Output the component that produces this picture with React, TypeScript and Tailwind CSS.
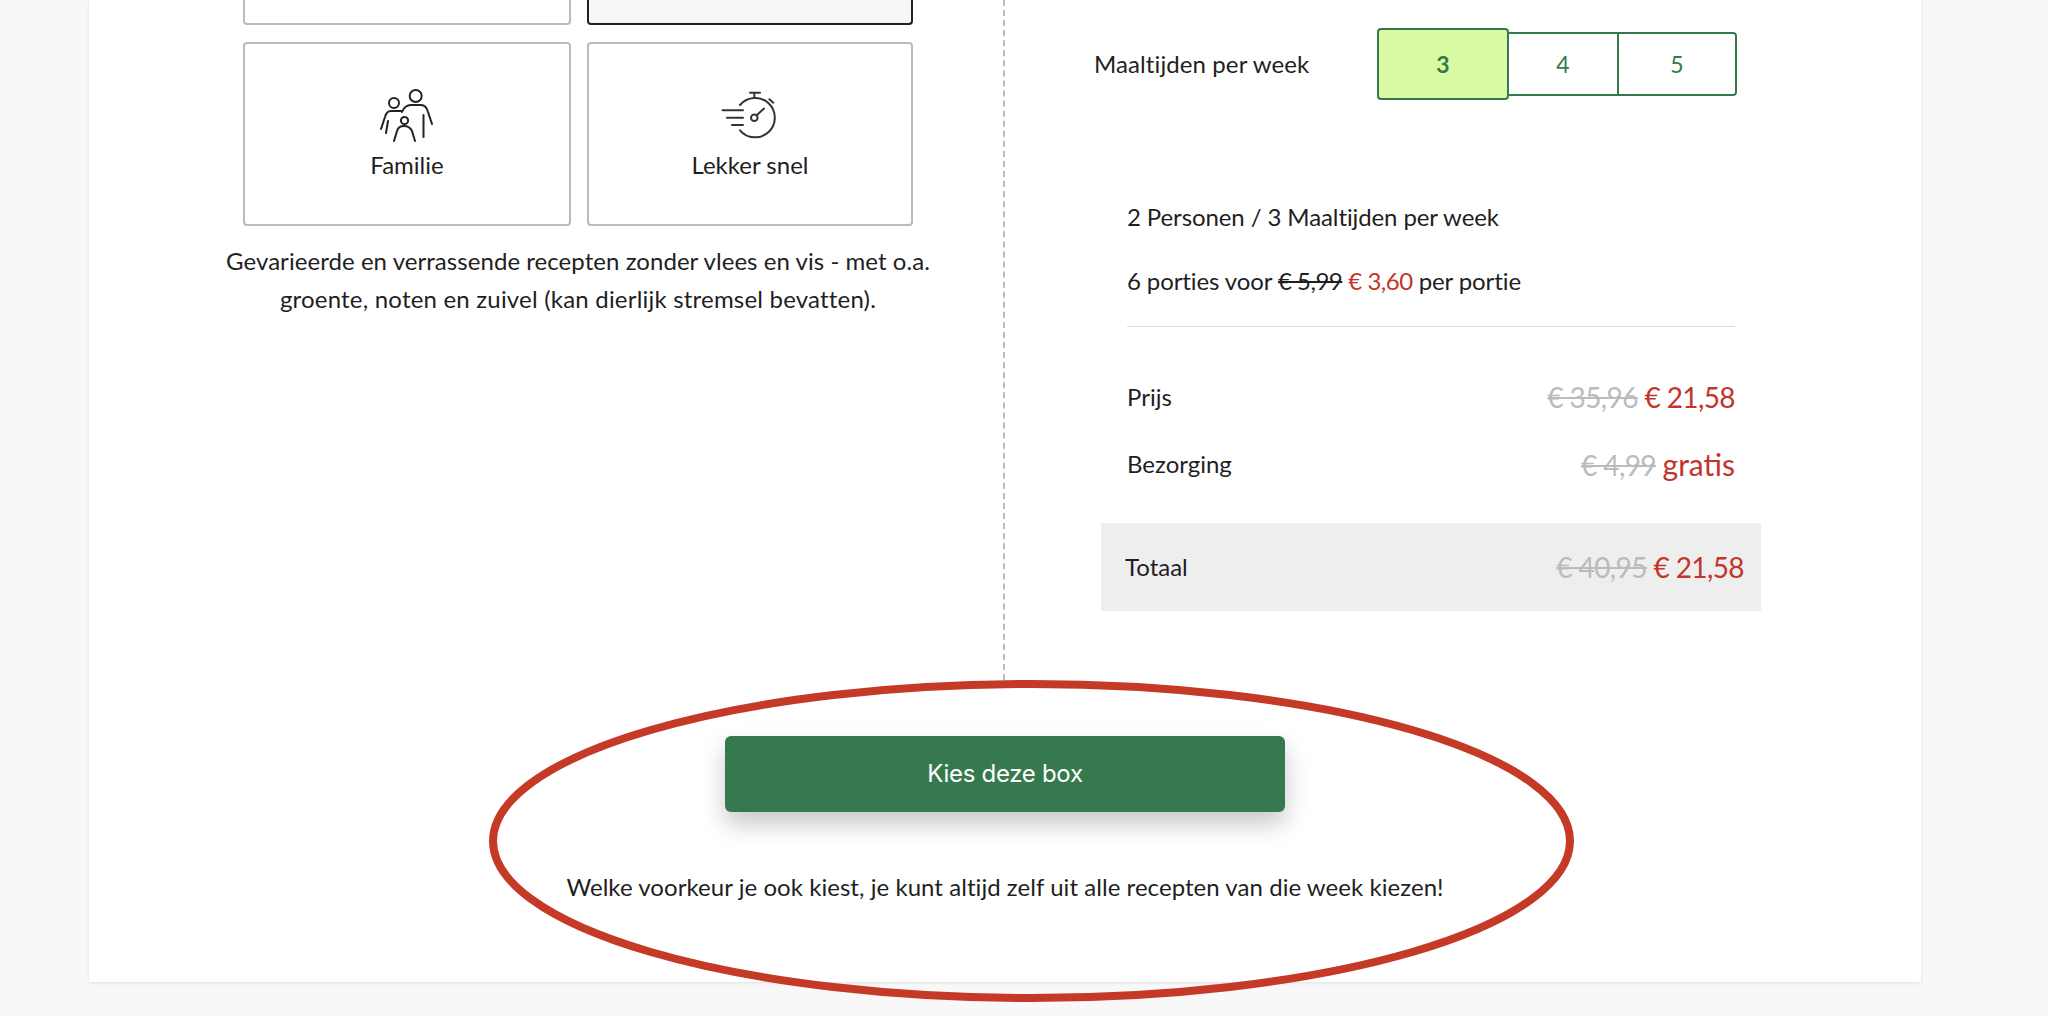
function FamilyIcon() {
  return (
    <svg width="56" height="58" viewBox="10 6 56 58" fill="none" stroke="#222" strokeWidth="2" strokeLinecap="round" strokeLinejoin="round">
      <circle cx="46.7" cy="15" r="6" />
      <path d="M33 31C35 26 38 24 42 24H52C56 24 58 27 59 31L63 43" />
      <path d="M54.5 34V56" />
      <circle cx="25" cy="22" r="5" />
      <path d="M12 48L16 36C17 32 19 30 22 30H33" />
      <path d="M17 52L19 40" />
      <circle cx="35.5" cy="39.5" r="3.6" />
      <path d="M25 60L28 50C29 46 31 45 35 45C39 45 41 46 43 50L46 60" />
    </svg>
  );
}

function TimerIcon() {
  return (
    <svg className="mr-[5px]" width="56" height="50" viewBox="10 9 56 50" fill="none" stroke="#333" strokeWidth="2" strokeLinecap="round">
      <path d="M30 24A19.7 19.7 0 1 1 30 49.3" />
      <path d="M44.3 12V17M40 11.7H50" />
      <path d="M59.3 18.3L63.3 21.7" />
      <circle cx="44.3" cy="36.7" r="3.3" />
      <path d="M47 34L54 27.5" />
      <path d="M12.5 29.3H33M17 36.7H33M22 44H33" />
    </svg>
  );
}

function PriceRow({ label, was, now, word }: { label: string; was: string; now: string; word?: boolean }) {
  return (
    <div className="flex h-[40px] items-center justify-between">
      <span className="text-[24px]">{label}</span>
      <span className="text-[28px] tracking-[-0.6px]">
        <s className="text-[#bbbbbb]">{was}</s>{" "}
        <span className={word ? "text-[30px] tracking-normal text-[#c1352b]" : "text-[#c1352b]"}>{now}</span>
      </span>
    </div>
  );
}

export default function App() {
  return (
    <div className="relative h-[1016px] overflow-hidden bg-[#f8f8f8] font-['Lato',sans-serif] text-[#1f1f1f]">
      <div className="ml-[89px] h-[982px] w-[1832px] bg-white shadow-[0_1px_3px_rgba(0,0,0,0.1)]">
        <div className="flex h-[680px]">
          <div className="w-[916px] border-r-2 border-dashed border-[#bbbbbb] pl-[134px]">
            <div className="w-[710px]">
              <div className="mx-[20px] grid grid-cols-[328px_326px] gap-x-[16px]">
                <div className="h-[25px] rounded-b border-2 border-t-0 border-[#bbbbbb]" />
                <div className="h-[25px] rounded-b border-2 border-t-0 border-[#222222] bg-[#f7f7f7]" />
              </div>
              <div className="mx-[20px] mt-[17px] grid grid-cols-[328px_326px] gap-x-[16px]">
                <div className="flex h-[184px] flex-col items-center rounded border-2 border-[#bbbbbb] pt-[43px]">
                  <FamilyIcon />
                  <span className="mt-[1px] text-[24px] leading-[38px]">Familie</span>
                </div>
                <div className="flex h-[184px] flex-col items-center rounded border-2 border-[#bbbbbb] pt-[46px]">
                  <TimerIcon />
                  <span className="mt-[6px] text-[24px] leading-[38px]">Lekker snel</span>
                </div>
              </div>
              <p className="mt-[16px] text-center text-[24px] leading-[38px]">
                <span className="tracking-[0.05px]">Gevarieerde en verrassende recepten zonder vlees en vis - met o.a.</span>
                <br />
                <span className="tracking-[0.2px]">groente, noten en zuivel (kan dierlijk stremsel bevatten).</span>
              </p>
            </div>
          </div>

          <div className="flex-1 pl-[89px] pt-[28px]">
            <div className="flex items-center">
              <span className="w-[283px] text-[24px] tracking-[0.1px]">Maaltijden per week</span>
              <div className="flex items-center text-[23px] text-[#37794f]">
                <div className="flex h-[72px] w-[132px] items-center justify-center rounded border-2 border-[#37794f] bg-[#d9f9a3] font-bold">3</div>
                <div className="flex h-[64px] w-[110px] items-center justify-center border-y-2 border-r-2 border-[#37794f]">4</div>
                <div className="flex h-[64px] w-[118px] items-center justify-center rounded-r border-y-2 border-r-2 border-[#37794f]">5</div>
              </div>
            </div>

            <div className="ml-[33px] mt-[98px] w-[608px]">
              <p className="text-[24px] leading-[38px] tracking-[-0.1px]">2 Personen / 3 Maaltijden per week</p>
              <p className="mt-[26px] text-[24px] leading-[38px] tracking-[-0.1px]">
                6 porties voor <s className="tracking-[-0.5px]">€ 5,99</s>{" "}
                <span className="tracking-[-0.5px] text-[#c1352b]">€ 3,60</span> per portie
              </p>
              <div className="mt-[26px] h-px bg-[#dddddd]" />
              <div className="mt-[50px]">
                <PriceRow label="Prijs" was="€ 35,96" now="€ 21,58" />
              </div>
              <div className="mt-[27px]">
                <PriceRow label="Bezorging" was="€ 4,99" now="gratis" word />
              </div>
            </div>

            <div className="ml-[7px] mt-[39px] flex h-[88px] w-[660px] items-center justify-between bg-[#eeeeee] pl-[24px] pr-[17px]">
              <span className="text-[24px]">Totaal</span>
              <span className="text-[28px] tracking-[-0.6px]">
                <s className="text-[#bbbbbb]">€ 40,95</s> <span className="text-[#c1352b]">€ 21,58</span>
              </span>
            </div>
          </div>
        </div>

        <div className="flex flex-col items-center">
          <button className="mt-[56px] h-[76px] w-[560px] rounded-md bg-[#37794f] font-['Inter',sans-serif] text-[24px] tracking-[-0.3px] text-white shadow-[0_12px_24px_rgba(0,0,0,0.22)]">
            Kies deze box
          </button>
          <p className="mt-[56px] text-[24px] leading-[38px] tracking-[0.05px]">
            Welke voorkeur je ook kiest, je kunt altijd zelf uit alle recepten van die week kiezen!
          </p>
        </div>
      </div>

      {/* hand drawn highlight over the button */}
      <svg className="absolute left-[489px] top-[680px]" width="1085" height="322" viewBox="0 0 1085 322" fill="none">
        <ellipse cx="542.5" cy="161" rx="538.5" ry="157" stroke="#c43a26" strokeWidth="8" />
      </svg>
    </div>
  );
}
